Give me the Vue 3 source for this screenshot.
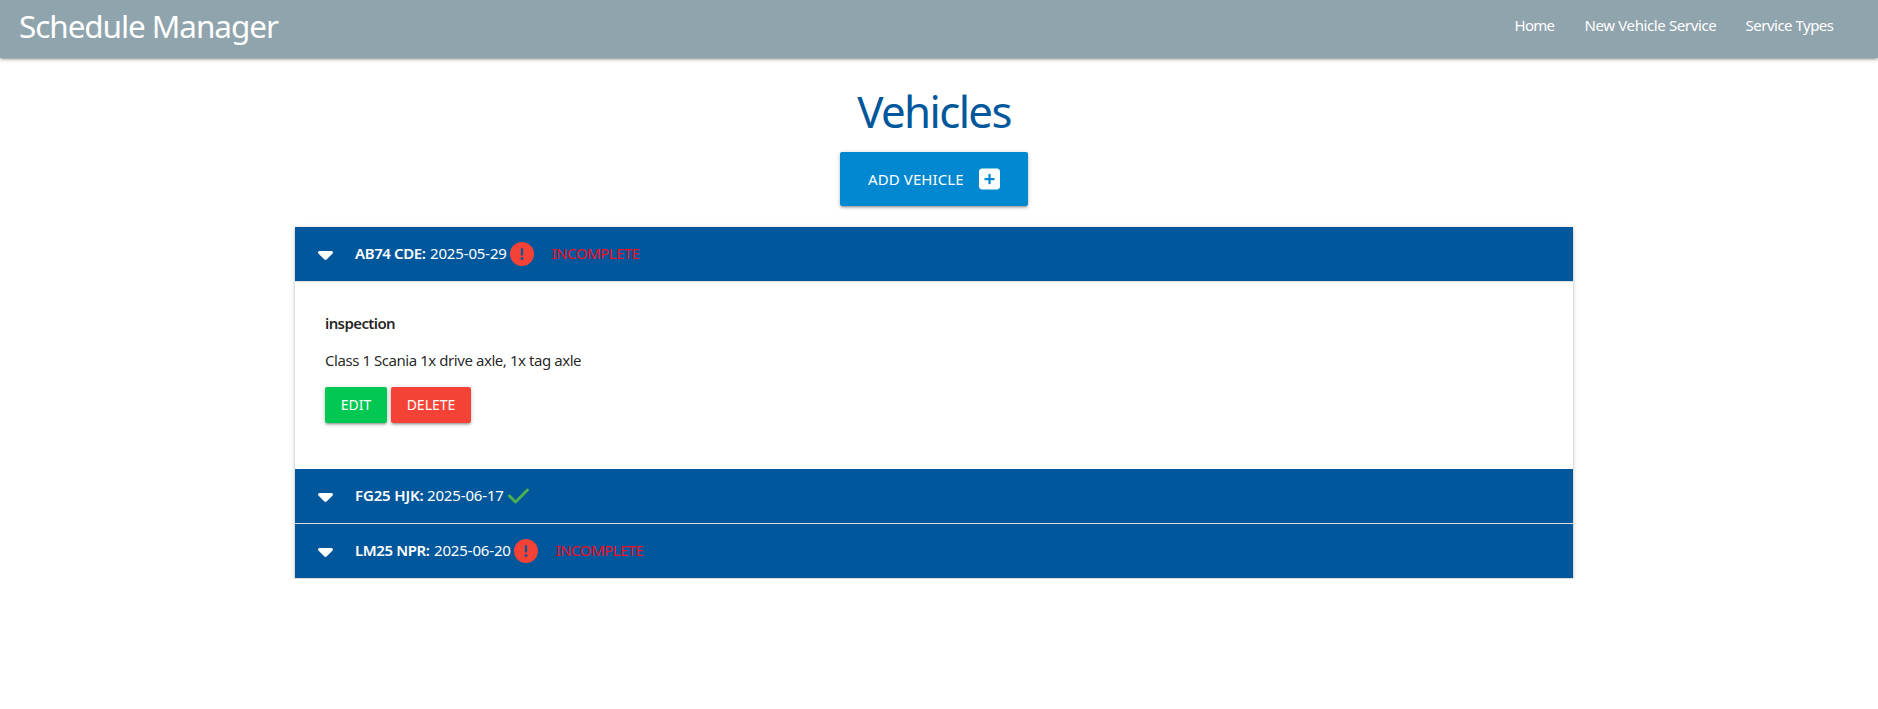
<script setup>
const links = [
  { text: 'Home', cls: 'l-home' },
  { text: 'New Vehicle Service', cls: 'l-new' },
  { text: 'Service Types', cls: 'l-types' },
]
const vehicles = [
  { reg: 'AB74 CDE:', date: '2025-05-29', done: false, open: true, cls: 'r1', type: 'inspection', notes: 'Class 1 Scania 1x drive axle, 1x tag axle' },
  { reg: 'FG25 HJK:', date: '2025-06-17', done: true, open: false, cls: 'r2' },
  { reg: 'LM25 NPR:', date: '2025-06-20', done: false, open: false, cls: 'r3' },
]
</script>

<template>
  <nav class="nav">
    <a class="logo">Schedule Manager</a>
    <div class="links">
      <a v-for="l in links" :key="l.text" :class="l.cls">{{ l.text }}</a>
    </div>
  </nav>
  <main class="main">
    <h3 class="title">Vehicles</h3>
    <button class="add">
      <span class="add-text">ADD VEHICLE</span>
      <svg class="plus" viewBox="0 0 448 512"><path d="M64 32C28.7 32 0 60.7 0 96V416c0 35.3 28.7 64 64 64H384c35.3 0 64-28.7 64-64V96c0-35.3-28.7-64-64-64H64zM200 344V280H136c-13.3 0-24-10.7-24-24s10.7-24 24-24h64V168c0-13.3 10.7-24 24-24s24 10.7 24 24v64h64c13.3 0 24 10.7 24 24s-10.7 24-24 24H248v64c0 13.3-10.7 24-24 24s-24-10.7-24-24z" /></svg>
    </button>
    <ul class="list">
      <li v-for="v in vehicles" :key="v.reg">
        <div class="head" :class="[v.cls, { open: v.open }]">
          <svg class="caret" viewBox="0 0 320 512"><path d="M137.4 374.6c12.5 12.5 32.8 12.5 45.3 0l128-128c9.2-9.2 11.9-22.9 6.9-34.9s-16.6-19.8-29.6-19.8L32 192c-12.9 0-24.6 7.8-29.6 19.8s-2.2 25.7 6.9 34.9l128 128z" /></svg>
          <strong class="reg">{{ v.reg }}</strong>
          <span class="date">{{ v.date }}</span>
          <svg v-if="v.done" class="check" viewBox="0 0 448 512"><path d="M438.6 105.4c12.5 12.5 12.5 32.8 0 45.3l-256 256c-12.5 12.5-32.8 12.5-45.3 0l-128-128c-12.5-12.5-12.5-32.8 0-45.3s32.8-12.5 45.3 0L160 338.7 393.4 105.4c12.5-12.5 32.8-12.5 45.3 0z" /></svg>
          <template v-else>
            <svg class="warn" viewBox="0 0 512 512"><path d="M256 512A256 256 0 1 0 256 0a256 256 0 1 0 0 512zm0-384c13.3 0 24 10.7 24 24V264c0 13.3-10.7 24-24 24s-24-10.7-24-24V152c0-13.3 10.7-24 24-24zM224 352a32 32 0 1 1 64 0 32 32 0 1 1 -64 0z" /></svg>
            <span class="status">INCOMPLETE</span>
          </template>
        </div>
        <div v-if="v.open" class="body">
          <strong class="type">{{ v.type }}</strong>
          <p class="notes">{{ v.notes }}</p>
          <div class="actions">
            <button class="btn edit">EDIT</button>
            <button class="btn delete">DELETE</button>
          </div>
        </div>
      </li>
    </ul>
  </main>
</template>

<style>
body {
  margin: 0;
  background: #fff;
}
</style>

<style scoped>
.nav, .main, button {
  font-family: "Noto Sans", "Open Sans", sans-serif;
}
.nav, .main {
  font-size: 15px;
  color: rgba(0, 0, 0, 0.87);
}
.nav {
  height: 58px;
  box-sizing: border-box;
  padding: 0 44px 0 19px;
  display: flex;
  justify-content: space-between;
  background: #90a4ae;
  color: #fff;
  box-shadow: 0 2px 2px 0 rgba(0, 0, 0, 0.14), 0 3px 1px -2px rgba(0, 0, 0, 0.12), 0 1px 5px 0 rgba(0, 0, 0, 0.2);
  white-space: nowrap;
}
.logo {
  font-size: 31.5px;
  line-height: 52px;
  letter-spacing: -1.08px;
}
.links {
  display: flex;
  gap: 30px;
  line-height: 50px;
}
.l-home { width: 40px; letter-spacing: -0.7px; }
.l-new { width: 131px; letter-spacing: -0.38px; }
.l-types { width: 88.5px; letter-spacing: -0.5px; }
.main {
  width: 1278px;
  margin-left: 295px;
  display: flex;
  flex-direction: column;
  align-items: center;
}
.title {
  margin: 29px 0 17px;
  font-size: 43.8px;
  line-height: 48px;
  font-weight: 400;
  color: #01579b;
  letter-spacing: -1.6px;
}
button {
  border: 0;
  padding: 0;
  border-radius: 2px;
  color: #fff;
  box-shadow: 0 2px 2px 0 rgba(0, 0, 0, 0.14), 0 3px 1px -2px rgba(0, 0, 0, 0.12), 0 1px 5px 0 rgba(0, 0, 0, 0.2);
}
svg {
  flex: none;
  display: block;
  fill: currentColor;
}
.add {
  width: 188px;
  height: 54px;
  padding-left: 28px;
  display: flex;
  align-items: center;
  background: #0288d1;
  font-size: 15px;
  white-space: nowrap;
}
.add-text {
  width: 111px;
  text-align: left;
  letter-spacing: 0.1px;
}
.plus, .check {
  width: 21px;
  height: 24px;
}
.list {
  width: 100%;
  margin: 21px 0 0;
  padding: 0;
  list-style: none;
  background: #fff;
  box-shadow: 0 2px 2px 0 rgba(0, 0, 0, 0.14), 0 3px 1px -2px rgba(0, 0, 0, 0.12), 0 1px 5px 0 rgba(0, 0, 0, 0.2);
}
.head {
  height: 55px;
  box-sizing: border-box;
  padding-left: 22.5px;
  border-bottom: 1px solid #ddd;
  display: flex;
  align-items: center;
  background: #01579b;
  color: #fff;
  white-space: nowrap;
}
.head strong, .head span {
  padding-bottom: 2px;
}
.caret {
  width: 15px;
  height: 24px;
  margin-right: 22.5px;
}
.reg {
  font-weight: 600;
  letter-spacing: -0.4px;
}
.date {
  width: 80px;
  letter-spacing: -0.15px;
}
.r1 .reg { width: 75px; }
.r2 .reg { width: 72px; letter-spacing: -0.15px; }
.r3 .reg { width: 79px; }
.check {
  margin-left: 1px;
  color: #4caf50;
}
.warn {
  width: 24px;
  height: 24px;
  color: #f44336;
}
.status {
  margin-left: 17.5px;
  color: #f20d22;
  letter-spacing: -0.5px;
}
.body {
  height: 187px;
  box-sizing: border-box;
  padding: 30px 30px 0;
}
.type {
  display: block;
  font-weight: 600;
  line-height: 23px;
  letter-spacing: -0.6px;
}
.notes {
  margin: 14px 0 16px;
  line-height: 22px;
  letter-spacing: -0.44px;
}
.actions {
  display: flex;
  gap: 4px;
}
.btn {
  height: 36px;
  padding-bottom: 2px;
  font-size: 14px;
}
.edit {
  width: 62px;
  background: #00c853;
}
.delete {
  width: 80px;
  background: #f44336;
}
</style>
